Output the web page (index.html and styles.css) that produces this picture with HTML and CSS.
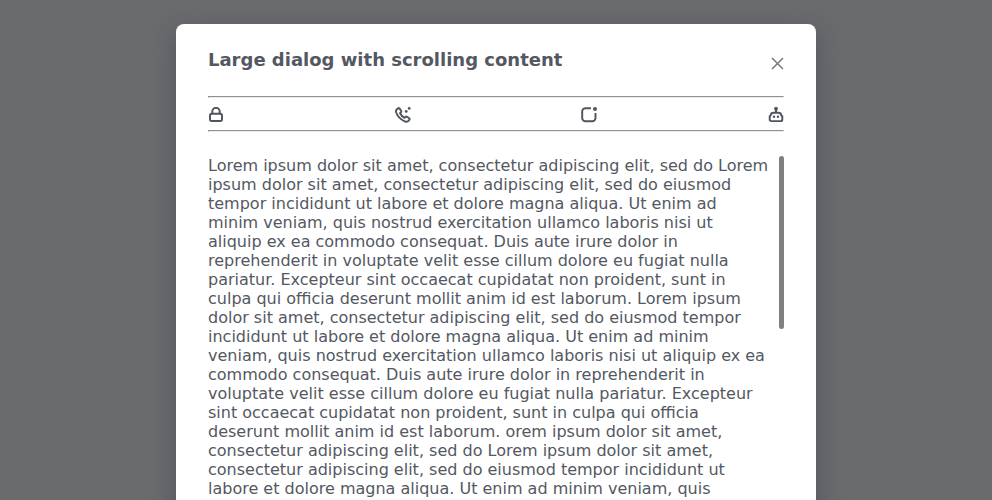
FILE: index.html
```html
<!DOCTYPE html>
<html lang="en">
<head>
<meta charset="utf-8">
<title>Dialog</title>
<link rel="stylesheet" href="styles.css">
</head>
<body>
<div class="backdrop">
  <section class="dialog" role="dialog" aria-labelledby="title">
    <header class="header">
      <h1 id="title">Large dialog with scrolling content</h1>
      <button class="close" aria-label="Close"><svg width="13" height="13" viewBox="0 0 13 13"><path d="M1 1l11 11M12 1L1 12"/></svg></button>
    </header>
    <hr>
    <div class="icons">
      <svg viewBox="0 0 16 16"><rect x="2" y="6.8" width="12" height="7.2" rx="1.8"/><path d="M4.3 6.6V4.5a3.7 3.7 0 0 1 7.4 0v2.1"/></svg>
      <svg viewBox="0 0 16 16"><path d="M1.5 2.7L3 1.3Q3.9.8 4.6 1.6L6.2 4Q6.6 4.8 5.9 5.4L5 6.3Q6.5 9.2 9.6 10.8L10.5 9.9Q11.2 9.3 12 9.8L14.2 11.3Q15 12 14.3 12.9L13 14.2Q11.7 15.2 9.8 14.3C5.6 12.5 2.4 9 1.1 5.2Q.7 3.7 1.5 2.7Z"/><circle class="dot" cx="11.2" cy="4.4" r="1.4"/><circle class="dot" cx="14.2" cy="1.4" r="1.4"/></svg>
      <svg viewBox="0 0 16 16"><path d="M10 1.2H4.4A3.2 3.2 0 0 0 1.2 4.4v6.7a3.2 3.2 0 0 0 3.2 3.2h6.9a3.2 3.2 0 0 0 3.2-3.2V6"/><circle class="dot" cx="14" cy="2" r="2"/></svg>
      <svg viewBox="0 0 16 16"><path d="M8 2v4M5.5 5.7h5Q13 5.7 13.2 8.2L14.3 9.5v2.9q0 1.7-1.7 1.7H3.4q-1.7 0-1.7-1.7V9.5L2.8 8.2Q3 5.7 5.5 5.7Z"/><circle class="dot" cx="8" cy="1.8" r="1.9"/><circle class="dot" cx="6" cy="9.8" r="1.2"/><circle class="dot" cx="10" cy="9.8" r="1.2"/></svg>
    </div>
    <hr>
    <div class="scroller">
      <p>Lorem ipsum dolor sit amet, consectetur adipiscing elit, sed do Lorem ipsum dolor sit amet, consectetur adipiscing elit, sed do eiusmod tempor incididunt ut labore et dolore magna aliqua. Ut enim ad minim veniam, quis nostrud exercitation ullamco laboris nisi ut aliquip ex ea commodo consequat. Duis aute irure dolor in reprehenderit in voluptate velit esse cillum dolore eu fugiat nulla pariatur. Excepteur sint occaecat cupidatat non proident, sunt in culpa qui officia deserunt mollit anim id est laborum. Lorem ipsum dolor sit amet, consectetur adipiscing elit, sed do eiusmod tempor incididunt ut labore et dolore magna aliqua. Ut enim ad minim veniam, quis nostrud exercitation ullamco laboris nisi ut aliquip ex ea commodo consequat. Duis aute irure dolor in reprehenderit in voluptate velit esse cillum dolore eu fugiat nulla pariatur. Excepteur sint occaecat cupidatat non proident, sunt in culpa qui officia deserunt mollit anim id est laborum. orem ipsum dolor sit amet, consectetur adipiscing elit, sed do Lorem ipsum dolor sit amet, consectetur adipiscing elit, sed do eiusmod tempor incididunt ut labore et dolore magna aliqua. Ut enim ad minim veniam, quis</p>
      <div class="thumb"></div>
    </div>
  </section>
</div>
</body>
</html>
```
FILE: styles.css
```css
* { box-sizing: border-box; }
body {
  margin: 0;
  height: 500px;
  overflow: hidden;
  font: 16px/19px "DejaVu Sans", sans-serif;
  color: #535862;
}
.backdrop {
  height: 500px;
  padding-top: 24px;
  background: #6a6b6d;
  overflow: hidden;
}
.dialog {
  width: 640px;
  height: 560px;
  margin: 0 auto;
  padding: 24px 32px;
  border-radius: 8px;
  background: #fff;
  box-shadow: 0 8px 24px rgba(50, 48, 68, .4);
}
.header {
  height: 48px;
  display: flex;
  justify-content: space-between;
}
h1 {
  margin: 0;
  font-size: 18px;
  line-height: 24px;
}
.close {
  width: 13px;
  height: 13px;
  margin-top: 9px;
  padding: 0;
  border: 0;
  background: none;
}
svg {
  display: block;
  fill: none;
  stroke: #505560;
  stroke-width: 1.95;
  stroke-linejoin: round;
}
.close svg { stroke: #777b83; stroke-width: 1.6; }
hr {
  margin: 0;
  border: 1px solid;
  border-color: #909090 #ededed #ededed #909090;
}
.icons {
  height: 32px;
  padding-top: 2px;
  display: flex;
  justify-content: space-between;
  align-items: center;
}
.icons svg { width: 16px; height: 16px; }
.dot { fill: #505560; stroke: none; }
.scroller {
  margin-top: 24px;
  display: flex;
  justify-content: space-between;
}
p { width: 563px; margin: 0; }
.thumb {
  width: 5px;
  height: 173px;
  border-radius: 2.5px;
  background: #808080;
}
```
